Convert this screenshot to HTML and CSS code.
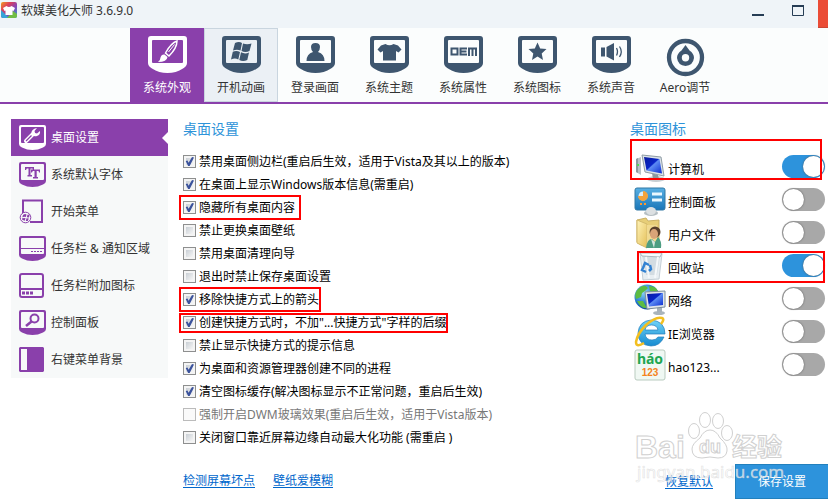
FILE: index.html
```html
<!DOCTYPE html>
<html lang="zh-CN">
<head>
<meta charset="utf-8">
<meta name="viewport" content="width=device-width, initial-scale=1">
<title>软媒美化大师 3.6.9.0</title>
<link rel="stylesheet" href="styles.css">
</head>
<body>
<svg class="defs" aria-hidden="true">
  <symbol id="frame" viewBox="0 0 39 37">
    <path fill-rule="evenodd" d="M3 0H36Q39 0 39 3V27Q39 30 35 32.500Q28 37 19.500 37Q11 37 4 32.500Q0 30 0 27V3Q0 0 3 0ZM5 4Q4 4 4 5V26Q4 27 5 27H34Q35 27 35 26V5Q35 4 34 4Z"/>
  </symbol>
  <symbol id="small-frame" viewBox="0 0 27 25">
    <path fill-rule="evenodd" d="M2 0H25Q27 0 27 2V19Q27 21 24 22.500Q19 25 13.500 25Q8 25 3 22.500Q0 21 0 19V2Q0 0 2 0ZM3 2Q2 2 2 3V17Q2 18 3 18H24Q25 18 25 17V3Q25 2 24 2Z"/>
  </symbol>
  <linearGradient id="screen" x1="0" y1="0" x2="1" y2="1"><stop offset="0" stop-color="#0a1c9c"/><stop offset=".45" stop-color="#0824c8"/><stop offset=".5" stop-color="#5d8cf4"/><stop offset="1" stop-color="#0b2bd0"/></linearGradient>
  <linearGradient id="panel" x1="0" y1="0" x2="0" y2="1"><stop offset="0" stop-color="#58b0e4"/><stop offset="1" stop-color="#1a76b8"/></linearGradient>
  <linearGradient id="folder" x1="0" y1="0" x2="1" y2="1"><stop offset="0" stop-color="#fff3b8"/><stop offset="1" stop-color="#e4bf58"/></linearGradient>
  <linearGradient id="ie" x1="0" y1="0" x2="0" y2="1"><stop offset="0" stop-color="#70d3f8"/><stop offset="1" stop-color="#168bd0"/></linearGradient>
  <radialGradient id="globe" cx=".35" cy=".3" r=".8"><stop offset="0" stop-color="#8fd5fa"/><stop offset=".6" stop-color="#2277cb"/><stop offset="1" stop-color="#0d3a85"/></radialGradient>
  <linearGradient id="rainbow" x1="0" y1="0" x2="1" y2="1"><stop offset="0" stop-color="#f0a020"/><stop offset=".3" stop-color="#df4059"/><stop offset=".6" stop-color="#8646b8"/><stop offset="1" stop-color="#28a8d0"/></linearGradient>
</svg>

<header class="titlebar">
  <svg class="app-logo" viewBox="0 0 16 16" aria-hidden="true"><rect width="16" height="16" rx="2" fill="url(#rainbow)"/><path d="M0 8L8 16H2Q0 16 0 14Z" fill="#36a4d8"/><path d="M6 16L12 9L16 12V14Q16 16 14 16Z" fill="#72bd45"/><path d="M5.500 4Q8 6 10.500 4L14 6L12.500 9L11.500 8.500V13H4.500V8.500L3.500 9L2 6Z" fill="#fff"/></svg>
  <h1 class="app-title">软媒美化大师 3.6.9.0</h1>
  <div class="window-controls">
    <button class="win-btn" aria-label="最小化"><svg viewBox="0 0 12 12"><path d="M0 10H12" stroke="#263d55" stroke-width="2"/></svg></button>
    <button class="win-btn" aria-label="最大化"><svg viewBox="0 0 12 12"><path d="M.5 1V10.500H11.500V1" fill="none" stroke="#263d55"/><path d="M0 1H12" stroke="#263d55" stroke-width="2"/></svg></button>
    <button class="win-btn close" aria-label="关闭"></button>
  </div>
</header>

<nav class="toolbar">
  <button class="tab active"><svg class="tab-icon" viewBox="0 0 39 37"><use href="#frame"/><path d="M29 5Q23 7 17.500 17L21 20Q29 12 29 5Z" fill="none" stroke="currentColor" stroke-width="1.500"/><path d="M26.500 8.500L20.500 16" stroke="currentColor"/><path d="M16.500 18.500L19.500 21Q19 26 10 26Q12.500 24 12.500 21.500Q13.500 18 16.500 18.500Z"/></svg>系统外观</button>
  <button class="tab hover"><svg class="tab-icon" viewBox="0 0 39 37"><use href="#frame"/><path d="M13 7Q17 5 20 7L18.500 14.500Q15 13 11 14.500ZM21 7.500Q25 9 29.500 7.500L27.500 15Q23.500 17 19.500 15ZM10.800 15.700Q14.500 14 18 16L16.300 23.500Q13 21.500 9 23.500ZM19 16.300Q23 18.500 27 16.500L25.300 24Q21 26 17.300 24Z"/></svg>开机动画</button>
  <button class="tab"><svg class="tab-icon" viewBox="0 0 39 37"><use href="#frame"/><path d="M15 11Q15 7 19.500 7Q24 7 24 11Q24 14 22 16Q28.500 18 28.500 25H10.500Q10.500 18 17 16Q15 14 15 11Z"/></svg>登录画面</button>
  <button class="tab"><svg class="tab-icon" viewBox="0 0 39 37"><use href="#frame"/><path d="M15.500 8Q19.500 10.500 23.500 8L28 9.500L31.500 13.500L28.500 16.500L26 15V24.500H13V15L10.500 16.500L7.500 13.500L11 9.500Z"/></svg>系统主题</button>
  <button class="tab"><svg class="tab-icon" viewBox="0 0 39 37"><use href="#frame"/><g fill="none" stroke="currentColor" stroke-width="2"><path d="M7.500 12.500H13.500V18.500H7.500ZM23 12.500H16.500V18.500H23M16.500 15.500H22.500M25 20V12.500H32V20M28.500 12V20"/></g></svg>系统属性</button>
  <button class="tab"><svg class="tab-icon" viewBox="0 0 39 37"><use href="#frame"/><path d="M19.500 6.500L22.200 12.500L28.500 13L23.700 17.400L25 24L19.500 20.500L14 24L15.300 17.400L10.500 13L16.800 12.500Z"/></svg>系统图标</button>
  <button class="tab"><svg class="tab-icon" viewBox="0 0 39 37"><use href="#frame"/><path d="M9 11.500H13V20.500H9ZM14.500 11L22 7V24.500L14.500 20.500Z"/><path d="M24.500 12Q26.500 15.500 24.500 19.500M27.500 10.500Q31 15.500 27.500 21" fill="none" stroke="currentColor" stroke-width="1.300"/></svg>系统声音</button>
  <button class="tab"><svg class="tab-icon" viewBox="0 0 39 37"><circle cx="19.500" cy="21.500" r="16.500" fill="none" stroke="currentColor" stroke-width="4.300"/><path fill-rule="evenodd" d="M19.500 9L23.500 14.500Q28 17.500 28 22Q27 29.500 19.500 30Q12 29.500 11 22Q11 17.500 15.500 14.500ZM19.500 18A3.700 3.700 0 1 0 19.500 25.400A3.700 3.700 0 1 0 19.500 18Z"/></svg>Aero调节</button>
</nav>

<div class="workspace">
  <nav class="sidebar">
    <a class="side-item active" href="#desktop"><svg class="side-icon" viewBox="0 0 27 25"><use href="#small-frame"/><path d="M7 16L14 9" stroke="currentColor" stroke-width="4" stroke-linecap="round"/><path d="M7 16L12.500 10.500" stroke="#8a40ab" stroke-width="1.300"/><path d="M18 3L15.500 6L16 8L18 8.500L21 6Q21.500 10 18 11Q14 12 12.500 8.500Q12 4 18 3Z"/></svg>桌面设置</a>
    <a class="side-item" href="#fonts"><svg class="side-icon" viewBox="0 0 27 25"><use href="#small-frame"/><path d="M6 5H15V8H14L13.500 6.500H11.500V13H13V14.500H8.500V13H9.500V6.500H7.800L7 8H6ZM12 7.500H21V10.500H20L19.500 9H17.700V15H19V16.500H14V15H15.500V9H13.800L13 10.500H12Z"/></svg>系统默认字体</a>
    <a class="side-item" href="#start"><svg class="side-icon" viewBox="0 0 27 25"><path d="M4 15V1.500H23V23H11" fill="none" stroke="currentColor" stroke-width="2"/><circle cx="6.500" cy="18.500" r="5.300" fill="#f7f9f9" stroke="currentColor"/><path d="M4 16Q6 14.500 7.500 15.500L6.800 18Q5 17.500 3.300 18.200ZM8.500 15.800L10.700 15.500L10 18.500L7.800 18.200ZM3 19.200L6.500 19L5.800 21.800Q4.500 21 3.400 21ZM7.500 19.200L9.800 19.500L8.800 22L6.800 22Z"/></svg>开始菜单</a>
    <a class="side-item" href="#taskbar"><svg class="side-icon" viewBox="0 0 27 25"><use href="#small-frame"/><path d="M2 12.500H25" stroke="currentColor"/><path d="M12 15.500H23" stroke="currentColor" stroke-dasharray="2 1"/></svg>任务栏 &amp; 通知区域</a>
    <a class="side-item" href="#tray"><svg class="side-icon" viewBox="0 0 27 25"><rect x="1" y="1" width="23" height="23" rx="2" fill="none" stroke="currentColor" stroke-width="2"/><path d="M1 16H24" stroke="currentColor" stroke-width="2"/><path d="M3 18.500H6V21.500H3ZM7 18.500H10V21.500H7ZM11 18.500H14V21.500H11Z"/></svg>任务栏附加图标</a>
    <a class="side-item" href="#control"><svg class="side-icon" viewBox="0 0 27 25"><use href="#small-frame"/><circle cx="15.500" cy="8.500" r="4" fill="none" stroke="currentColor" stroke-width="2"/><path d="M12.500 11.500L7 16" stroke="currentColor" stroke-width="2.500"/></svg>控制面板</a>
    <a class="side-item" href="#context"><svg class="side-icon" viewBox="0 0 27 25"><path fill-rule="evenodd" d="M1 0H24L25 1V24L24 25H1L0 24V1ZM2 2V23H8V2Z"/></svg>右键菜单背景</a>
  </nav>

  <main class="settings">
    <h2 class="section-title">桌面设置</h2>
    <div class="options">
      <label class="option"><input class="check" type="checkbox" checked>禁用桌面侧边栏(重启后生效，适用于Vista及其以上的版本)</label>
      <label class="option"><input class="check" type="checkbox" checked>在桌面上显示Windows版本信息(需重启)</label>
      <label class="option marked wide"><input class="check" type="checkbox" checked>隐藏所有桌面内容</label>
      <label class="option"><input class="check" type="checkbox">禁止更换桌面壁纸</label>
      <label class="option"><input class="check" type="checkbox">禁用桌面清理向导</label>
      <label class="option"><input class="check" type="checkbox">退出时禁止保存桌面设置</label>
      <label class="option marked"><input class="check" type="checkbox" checked>移除快捷方式上的箭头</label>
      <label class="option marked compact"><input class="check" type="checkbox" checked>创建快捷方式时，不加"...快捷方式"字样的后缀</label>
      <label class="option"><input class="check" type="checkbox">禁止显示快捷方式的提示信息</label>
      <label class="option"><input class="check" type="checkbox" checked>为桌面和资源管理器创建不同的进程</label>
      <label class="option"><input class="check" type="checkbox" checked>清空图标缓存(解决图标显示不正常问题，重启后生效)</label>
      <label class="option disabled"><input class="check" type="checkbox" disabled>强制开启DWM玻璃效果(重启后生效，适用于Vista版本)</label>
      <label class="option"><input class="check" type="checkbox">关闭窗口靠近屏幕边缘自动最大化功能 (需重启 )</label>
    </div>
    <div class="tool-links"><a href="#pixels">检测屏幕坏点</a><a href="#blur">壁纸爱模糊</a></div>
  </main>

  <aside class="desktop-icons">
    <h2 class="section-title">桌面图标</h2>
    <div class="icon-list">
      <label class="icon-row boxed-tall"><svg class="item-icon" viewBox="0 0 32 32"><path d="M2 8L7 6V24L2 21Z" fill="#b9c2c8"/><path d="M2 8L4 7V22L2 21Z" fill="#8e989e"/><path d="M3 14H5" stroke="#55d655" stroke-width="2"/><ellipse cx="22" cy="28" rx="9" ry="3" fill="#c8cfd3"/><path d="M18 22L24 24L25 28H19Z" fill="#8d999f"/><path d="M8 4L27 6L30 25L11 21Z" fill="#dce3e8" stroke="#8f9ca5"/><path d="M10 6L25.500 8L28 22.500L12.500 19.500Z" fill="url(#screen)"/></svg><span class="item-name">计算机</span><input class="switch" type="checkbox" role="switch" checked></label>
      <label class="icon-row"><svg class="item-icon" viewBox="0 0 32 32"><rect x="1" y="4" width="30" height="22" rx="2" fill="url(#panel)" stroke="#3278a4"/><circle cx="9" cy="12" r="4.500" fill="#d9edf8"/><path d="M9 12V7A5 5 0 1 1 4 12Z" fill="#f2a33c"/><path d="M18 10H28M18 16H28" stroke="#eaf8ff" stroke-width="3"/><path d="M6 20H8M10 20H12" stroke="#ff982e" stroke-width="2"/><ellipse cx="17" cy="29" rx="7" ry="3" fill="#b6bfc3"/><ellipse cx="17" cy="27" rx="5" ry="4" fill="#dce0e2"/></svg><span class="item-name">控制面板</span><input class="switch" type="checkbox" role="switch"></label>
      <label class="icon-row"><svg class="item-icon" viewBox="0 0 32 32"><path d="M3 3L12 1L14 4L25 3V28H7L3 25Z" fill="#e7ce78" stroke="#cbb164"/><path d="M3 3L13 7V31L3 26Z" fill="url(#folder)" stroke="#d4ba6c"/><path d="M13 8H23V27H13Z" fill="#f1da91"/><circle cx="21" cy="15" r="5.500" fill="#59402b"/><ellipse cx="20" cy="17" rx="4" ry="5" fill="#d9a478"/><path d="M12 31Q13 22 18 22L21 25L24 20Q28 24 27 31Z" fill="#4d9d82"/><path d="M17 22L21 25L20 31Z" fill="#d6e5df"/></svg><span class="item-name">用户文件</span><input class="switch" type="checkbox" role="switch"></label>
      <label class="icon-row boxed"><svg class="item-icon" viewBox="0 0 32 32"><path d="M6 3L28 4L25 29L9 30Z" fill="#e8eef2" stroke="#c5cfd6"/><path d="M8 5L12 25H23L26 6Z" fill="#d3dce2"/><path d="M6 3H28L26 7L8 6Z" fill="#f8fafc" stroke="#a9b5bd"/><path d="M12 7L15 28M24 7L21 28" stroke="#f5f8fa" stroke-width="2"/><path d="M9 18L11 13L15 15M16 15L17 19L15 21M12 22L8 20L9 18" fill="none" stroke="#3382d2" stroke-width="2.500"/></svg><span class="item-name">回收站</span><input class="switch" type="checkbox" role="switch" checked></label>
      <label class="icon-row"><svg class="item-icon" viewBox="0 0 32 32"><circle cx="13" cy="14" r="12.500" fill="url(#globe)"/><path d="M4 6Q10 0 14 5L11 8L8 10L7 14L2 16Q0 10 4 6ZM15 3Q23 3 24 9L19 10L16 8ZM3 18L9 18L13 25Q7 26 3 18Z" fill="#5dbc43"/><ellipse cx="25" cy="30" rx="6" ry="2" fill="#aab4bb"/><path d="M23 23L28 22V29L23 30Z" fill="#a7b1b9"/><path d="M11 9L31 8L31 24L13 26Z" fill="#e1e5ea" stroke="#7d8e9b"/><path d="M13 11L29 10L29 22L15 23.500Z" fill="url(#screen)"/></svg><span class="item-name">网络</span><input class="switch" type="checkbox" role="switch"></label>
      <label class="icon-row"><svg class="item-icon" viewBox="0 0 32 32"><path fill-rule="evenodd" d="M31 18H11Q12 24 18 24Q22 24 24 21H30Q26 30 17 30Q4 29 4 17Q5 5 17 4Q31 5 31 18ZM24 14Q23 9 17.500 9Q12 9 11 14Z" fill="url(#ie)" stroke="#247cba" stroke-width=".7"/><path d="M27 8Q31 3 28 2Q22 0 12 9Q3 18 2 26Q2 32 10 27" fill="none" stroke="#f3bf20" stroke-width="2.500"/></svg><span class="item-name">IE浏览器</span><input class="switch" type="checkbox" role="switch"></label>
      <label class="icon-row"><svg class="item-icon" viewBox="0 0 32 32"><rect x="1" y="1" width="30" height="30" rx="2" fill="#f0f8f3" stroke="#b9cbbf"/><text x="16" y="15" text-anchor="middle" class="hao-word">háo</text><text x="16" y="27" text-anchor="middle" class="hao-number">123</text></svg><span class="item-name">hao123...</span><input class="switch" type="checkbox" role="switch"></label>
    </div>
    <div class="actions"><a href="#reset">恢复默认</a><button class="save">保存设置</button></div>
    <svg class="watermark" viewBox="0 0 160 84" aria-hidden="true">
      <g class="mark-outline"><ellipse cx="64" cy="23" rx="5.500" ry="7.500"/><ellipse cx="75" cy="12" rx="5.500" ry="7.500"/><ellipse cx="88" cy="13" rx="5.500" ry="7.500"/><ellipse cx="97" cy="25" rx="5.500" ry="7.500"/><path d="M80 22Q86 22 90 30Q98 37 97 43Q96 50 88 50Q80 48 72 50Q62 50 62 41Q62 36 70 30Q74 22 80 22Z"/><text x="5" y="50" class="mark-large">Bai</text><text x="69" y="45" class="mark-paw">du</text><text x="102" y="48" class="mark-cjk">经验</text></g>
      <text x="7" y="70" class="mark-url">jingyan.baidu.com</text>
    </svg>
  </aside>
</div>
</body>
</html>
```
FILE: styles.css
```css
* { box-sizing: border-box; }

body {
  margin: 0;
  min-height: 100vh;
  display: flex;
  flex-direction: column;
  background: #fff;
  color: #000;
  font: 12px/20px "Noto Sans", "Noto Sans CJK SC", sans-serif;
}

button {
  border: 0;
  padding: 0;
  background: none;
  color: inherit;
  font: inherit;
}

svg { fill: currentColor; }
.defs { position: absolute; width: 0; height: 0; }

.titlebar {
  display: flex;
  height: 28px;
  background: #eff4f8;
}
.app-logo { width: 16px; height: 16px; margin: 2px 4px 0 1px; }
.app-title { margin: 0; font-size: 12px; font-weight: 400; line-height: 22px; color: #333; }
.window-controls { display: flex; gap: 28px; margin-left: auto; }
.win-btn { display: flex; width: 12px; padding-top: 5px; }
.win-btn svg { width: 12px; height: 12px; }
.win-btn.close { width: 10px; margin-left: -14px; background: #eb4c36; border-bottom: 1px solid #c84635; }

.toolbar {
  display: flex;
  height: 76px;
  padding-left: 130px;
  background: #fbfdfd;
  border-bottom: 2px solid #8a40ab;
}
.tab {
  display: flex;
  flex-direction: column;
  align-items: center;
  width: 74px;
  padding-top: 8px;
  gap: 5px;
  color: #333;
}
.tab-icon { width: 39px; height: 37px; flex: none; overflow: visible; color: #3e566f; }
.tab.active { background: #8a40ab; color: #fff; }
.tab.active .tab-icon { color: #fff; }
.tab.hover { background: #ebf0f5; box-shadow: inset 0 0 0 1px #c9d5df; }

.workspace {
  flex: 1;
  display: grid;
  grid-template-columns: 157px 1fr 198px;
  padding: 15px 0 2px 11px;
}

.sidebar { align-self: start; background: #f7f9f9; }
.side-item {
  display: flex;
  align-items: center;
  gap: 5px;
  height: 37px;
  padding-left: 8px;
  color: #333;
  text-decoration: none;
  position: relative;
}
.side-icon { width: 27px; height: 25px; color: #8a40ab; }
.side-item.active { background: #8a40ab; color: #fff; }
.side-item.active .side-icon { color: #fff; }
.side-item.active::after {
  content: "";
  position: absolute;
  right: 0;
  border: 6px solid transparent;
  border-right-color: #fff;
  border-left: 0;
}

.section-title { margin: 0; font-size: 14px; font-weight: 400; line-height: 20px; color: #2d93d9; }
.settings { padding-left: 15px; }
.options { display: flex; flex-direction: column; align-items: flex-start; padding-top: 11px; }
.option { display: flex; align-items: center; gap: 3px; height: 23px; position: relative; white-space: nowrap; }
.option.disabled { color: #777; }
.marked::after {
  content: "";
  position: absolute;
  inset: -1px -2px -1px -4px;
  border: 2px solid #f00;
}
.marked.wide::after { right: -6px; }
.marked.compact::after { top: 2px; bottom: 1px; }

.check {
  appearance: none;
  width: 13px;
  height: 13px;
  margin: 0;
  border: 1px solid #8e8f8f;
  background: linear-gradient(135deg, #c9cfd5, #f5f5f5) content-box, #f4f4f4;
  padding: 2px;
  position: relative;
}
.check:disabled { border-color: #bbb; background: #fafafa; }
.check:checked::before {
  content: "";
  position: absolute;
  inset: 1px;
  background: #3b529c;
  clip-path: polygon(8% 44%, 28% 40%, 40% 65%, 78% 0, 100% 6%, 52% 100%, 34% 100%);
}

a { color: #0067cc; text-decoration: underline; text-underline-offset: 2px; }
.tool-links { display: flex; gap: 18px; padding-top: 22px; }

.desktop-icons { display: flex; flex-direction: column; position: relative; }
.icon-list { display: flex; flex-direction: column; padding: 11px 3px 0 4px; }
.icon-row { display: flex; align-items: center; height: 33px; gap: 2px; position: relative; }
.item-icon { width: 32px; height: 32px; }
.item-name { flex: 1; padding-top: 6px; }
.boxed-tall::after, .boxed::after { content: ""; position: absolute; border: 2px solid #f00; z-index: 1; }
.boxed-tall::after { inset: -11px 3px 3px -4px; }
.boxed::after { inset: 2px 0 -1px 3px; }
.hao-word { font: bold 14px "Noto Sans", sans-serif; fill: #22a650; }
.hao-number { font: bold 10px "Liberation Sans", sans-serif; fill: #f58220; }

.switch {
  appearance: none;
  width: 43px;
  height: 23px;
  margin: 0;
  border-radius: 12px;
  background: #a8a8a8;
  position: relative;
}
.switch::before {
  content: "";
  position: absolute;
  top: 1px;
  left: 1px;
  width: 21px;
  height: 21px;
  border-radius: 50%;
  background: #fff;
  box-shadow: 0 0 2px #555;
}
.switch:checked { background: #2d93dc; }
.switch:checked::before { left: 21px; }

.actions { display: flex; align-items: center; justify-content: space-between; margin-top: auto; padding-left: 35px; }
.save { width: 93px; height: 35px; border: 1px solid #2280bd; border-right: 0; background: #2d93dc; color: #fff; }

.watermark { position: absolute; right: 38px; bottom: 7px; width: 160px; height: 84px; pointer-events: none; }
.mark-outline { fill: #fff; fill-opacity: .8; stroke: #d0d0d0; stroke-width: 1; }
.mark-large { font: bold 32px "Liberation Sans", sans-serif; }
.mark-paw { font: bold 18px "Liberation Sans", sans-serif; }
.mark-cjk { font: bold 25px "Noto Sans CJK SC", sans-serif; }
.mark-url { font: 17px "Noto Sans", sans-serif; fill: #fff; fill-opacity: .7; stroke: #ccc; stroke-opacity: .6; stroke-width: .6; }
```
